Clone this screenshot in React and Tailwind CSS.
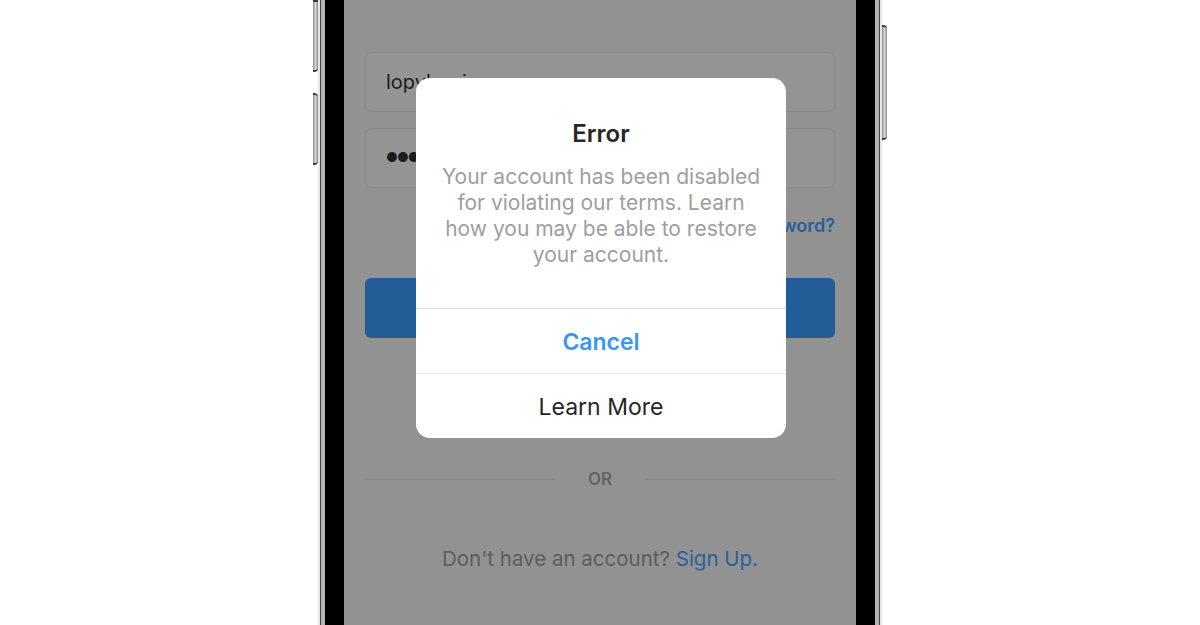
import React from 'react';

const SideButton = ({ className }) => (
  <div className={`w-[5px] border-y-2 border-[#3a3a3a] bg-gradient-to-r from-[#8c8c8c] via-[#d6d6d6] to-[#8c8c8c] ${className}`}></div>
);

const App = () => {
  return (
    <div className="h-[625px] w-full overflow-hidden bg-white flex justify-center font-['Inter',sans-serif]">
      {/* left side buttons */}
      <div className="flex flex-col">
        <SideButton className="h-[72px] rounded-br-sm" />
        <SideButton className="h-[72px] mt-[21px] rounded-r-sm" />
      </div>

      {/* phone frame */}
      <div className="h-[625px] flex bg-[#e6e6e6] px-[2px]">
        <div className="flex bg-[#444] px-[1px]">
          <div className="flex bg-gradient-to-r from-[#b5b5b5] via-[#d0d0d0] to-[#b5b5b5] px-[4px]">
            <div className="flex bg-black px-[19px]">
              {/* screen */}
              <div className="relative w-[512px] h-[625px] bg-[#929292] px-[21px] pt-[52px] flex flex-col">
                <div className="h-[60px] rounded-md border border-[#888] bg-[#949494] flex items-center px-[20px] text-[20px] text-[#1c1c1c]">
                  lopybunja
                </div>
                <div className="mt-[16px] h-[60px] rounded-md border border-[#888] bg-[#949494] flex items-center px-[20px] text-[13px] tracking-[-1px] text-[#1c1c1c]">
                  ●●●●●●●●●
                </div>
                <div className="mt-[26px] text-right text-[18px] font-semibold text-[#28609a] leading-[24px]">
                  Forgot password?
                </div>
                <div className="mt-[40px] h-[60px] rounded-md bg-[#235d97] flex items-center justify-center text-[18px] font-semibold text-[#9db4cb]">
                  Log In
                </div>

                <div className="mt-[129px] flex items-center gap-[34px]">
                  <div className="flex-1 h-px bg-[#8b8b8b]"></div>
                  <span className="text-[17px] font-semibold text-[#626262] leading-[24px]">OR</span>
                  <div className="flex-1 h-px bg-[#8b8b8b]"></div>
                </div>

                <div className="mt-[55px] text-center text-[20.5px] text-[#5d5d5d] leading-[26px]">
                  Don't have an account? <span className="text-[#2b6198]">Sign Up.</span>
                </div>

                {/* alert dialog */}
                <div className="absolute left-[72px] top-[78px] w-[370px] h-[360px] bg-white rounded-[14px] flex flex-col overflow-hidden">
                  <div className="flex-1 flex flex-col items-center pt-[43px] px-[20px]">
                    <h2 className="text-[24px] font-semibold text-[#262626] leading-[26px]">Error</h2>
                    <p className="mt-[17px] max-w-[325px] text-center text-[21px] leading-[26px] text-[#9e9e9e]">
                      Your account has been disabled for violating our terms. Learn how you may be able to restore your account.
                    </p>
                  </div>
                  <div className="h-[65px] pt-[3px] border-t border-[#dbdbdb] flex items-center justify-center text-[23px] font-semibold text-[#3897f0]">
                    Cancel
                  </div>
                  <div className="h-[65px] pt-[3px] border-t border-[#e6e6e6] flex items-center justify-center text-[23px] text-[#262626]">
                    Learn More
                  </div>
                </div>
              </div>
            </div>
          </div>
        </div>
      </div>

      {/* right side button */}
      <div className="flex flex-col pt-[25px]">
        <SideButton className="h-[115px] rounded-r-sm" />
      </div>
    </div>
  );
};

export default App;
